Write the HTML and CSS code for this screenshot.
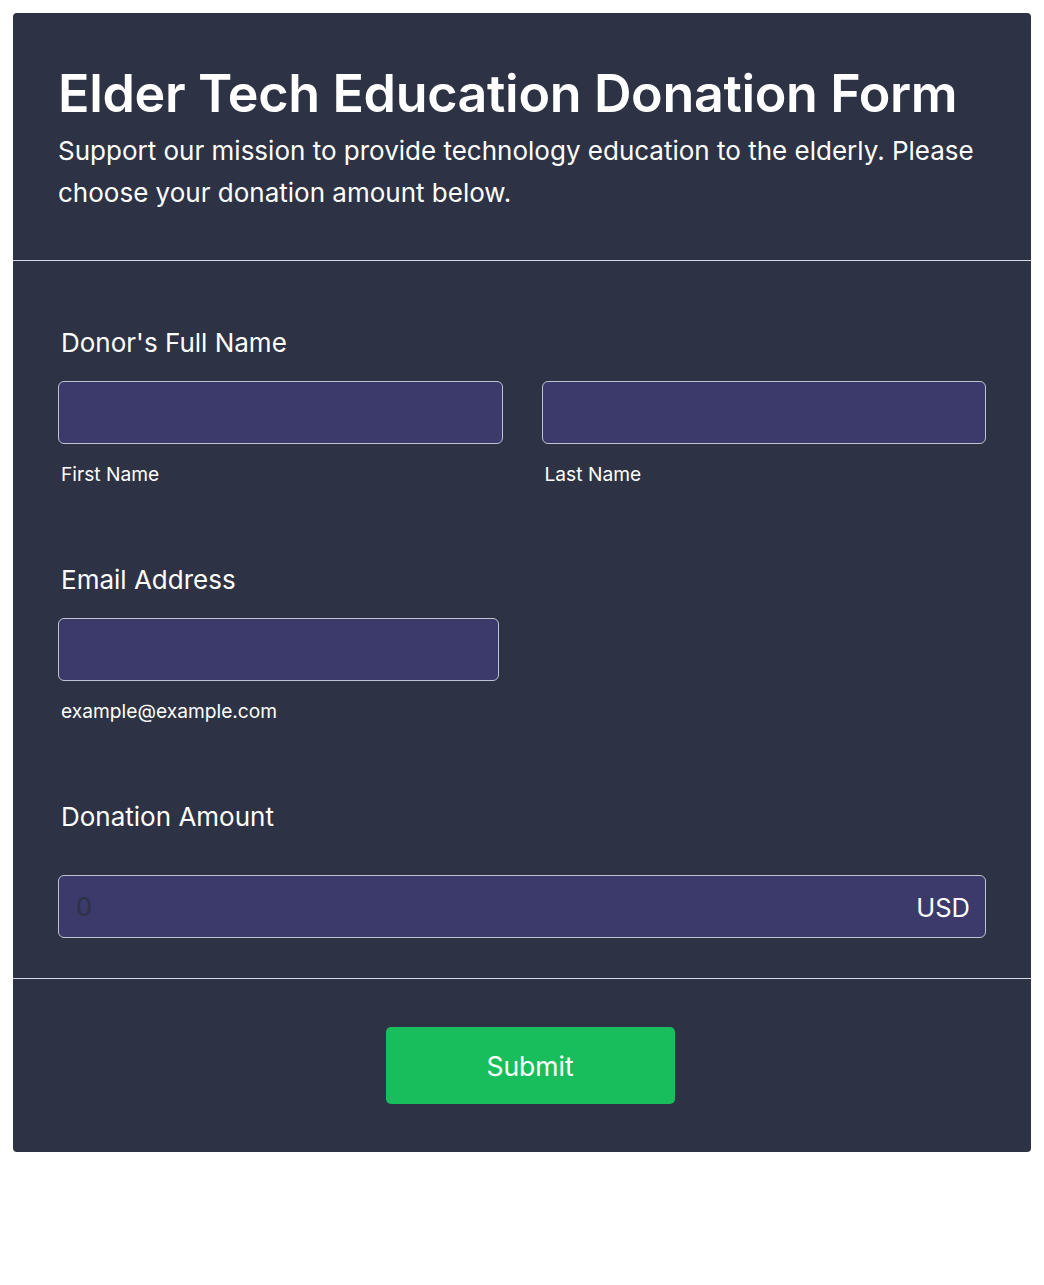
FILE: index.html
```html
<!DOCTYPE html>
<html lang="en">
<head>
  <meta charset="UTF-8">
  <meta name="viewport" content="width=device-width, initial-scale=1.0">
  <title>Elder Tech Education Donation Form</title>
  <link rel="stylesheet" href="styles.css">
</head>
<body>
  <form class="form-card">
    <div class="form-header">
      <h1>Elder Tech Education Donation Form</h1>
      <p>Support our mission to provide technology education to the elderly. Please choose your donation amount below.</p>
    </div>

    <div class="form-body">
      <div class="field">
        <label class="field-label">Donor's Full Name</label>
        <div class="name-row">
          <div class="sub-field">
            <input type="text" name="first-name">
            <span class="sub-label">First Name</span>
          </div>
          <div class="sub-field">
            <input type="text" name="last-name">
            <span class="sub-label">Last Name</span>
          </div>
        </div>
      </div>

      <div class="field">
        <label class="field-label">Email Address</label>
        <div class="sub-field email">
          <input type="email" name="email">
          <span class="sub-label">example@example.com</span>
        </div>
      </div>

      <div class="field amount-field">
        <label class="field-label">Donation Amount</label>
        <div class="amount-box">
          <input type="text" name="amount" placeholder="0">
          <span class="currency">USD</span>
        </div>
      </div>
    </div>

    <div class="form-footer">
      <button type="submit">Submit</button>
    </div>
  </form>
</body>
</html>
```

FILE: styles.css
```css
/* Colours */
:root {
  --card-bg: #2d3344;
  --input-bg: #3b3a6a;
  --input-border: #c0c2cf;
  --divider: #d4d8e2;
  --text-color: #ffffff;
  --button-bg: #18be5b;
}

body {
  margin: 13px;
  font-family: Inter, "Noto Sans", sans-serif;
  color: var(--text-color);
  background: #ffffff;
}

.form-card {
  width: 1018px;
  background-color: var(--card-bg);
  border-radius: 4px;
}

/* Header */
.form-header {
  padding: 50px 45px 46px;
  border-bottom: 1px solid var(--divider);
}

.form-header h1 {
  margin: 0;
  font-size: 52px;
  font-weight: 600;
  line-height: 1.2;
  letter-spacing: -0.35px;
}

.form-header p {
  margin: 5px 0 0;
  font-size: 26px;
  line-height: 42px;
}

/* Body */
.form-body {
  padding: 64px 45px 40px;
  border-bottom: 1px solid var(--divider);
}

.field {
  margin-bottom: 76px;
}

.field.amount-field {
  margin-bottom: 0;
}

.field-label {
  display: block;
  padding-left: 3px;
  font-size: 26px;
  line-height: 36px;
  margin-bottom: 20px;
}

.amount-field .field-label {
  margin-bottom: 40px;
}

.name-row {
  display: grid;
  grid-template-columns: 1fr 1fr;
  gap: 39px;
}

.sub-field {
  display: flex;
  flex-direction: column;
}

.sub-field.email {
  width: 441px;
}

input {
  box-sizing: border-box;
  height: 63px;
  width: 100%;
  background-color: var(--input-bg);
  border: 1.5px solid var(--input-border);
  border-radius: 6px;
  padding: 0 17px;
  font-family: inherit;
  font-size: 25.5px;
  color: var(--text-color);
  outline: none;
}

.sub-label {
  padding-left: 3px;
  margin-top: 18px;
  font-size: 19.2px;
  line-height: 24px;
}

.amount-box {
  position: relative;
}

.amount-box input {
  padding-right: 80px;
}

.amount-box input::placeholder {
  color: #2d3344;
}

.currency {
  position: absolute;
  right: 16px;
  top: 50%;
  transform: translateY(-50%);
  font-size: 25.5px;
}

/* Footer */
.form-footer {
  display: flex;
  justify-content: center;
  padding: 48px 0 48px 16px;
}

.form-footer button {
  width: 289px;
  height: 77px;
  border: none;
  border-radius: 5px;
  background-color: var(--button-bg);
  color: var(--text-color);
  font-family: inherit;
  font-size: 26.5px;
  cursor: pointer;
}
```
